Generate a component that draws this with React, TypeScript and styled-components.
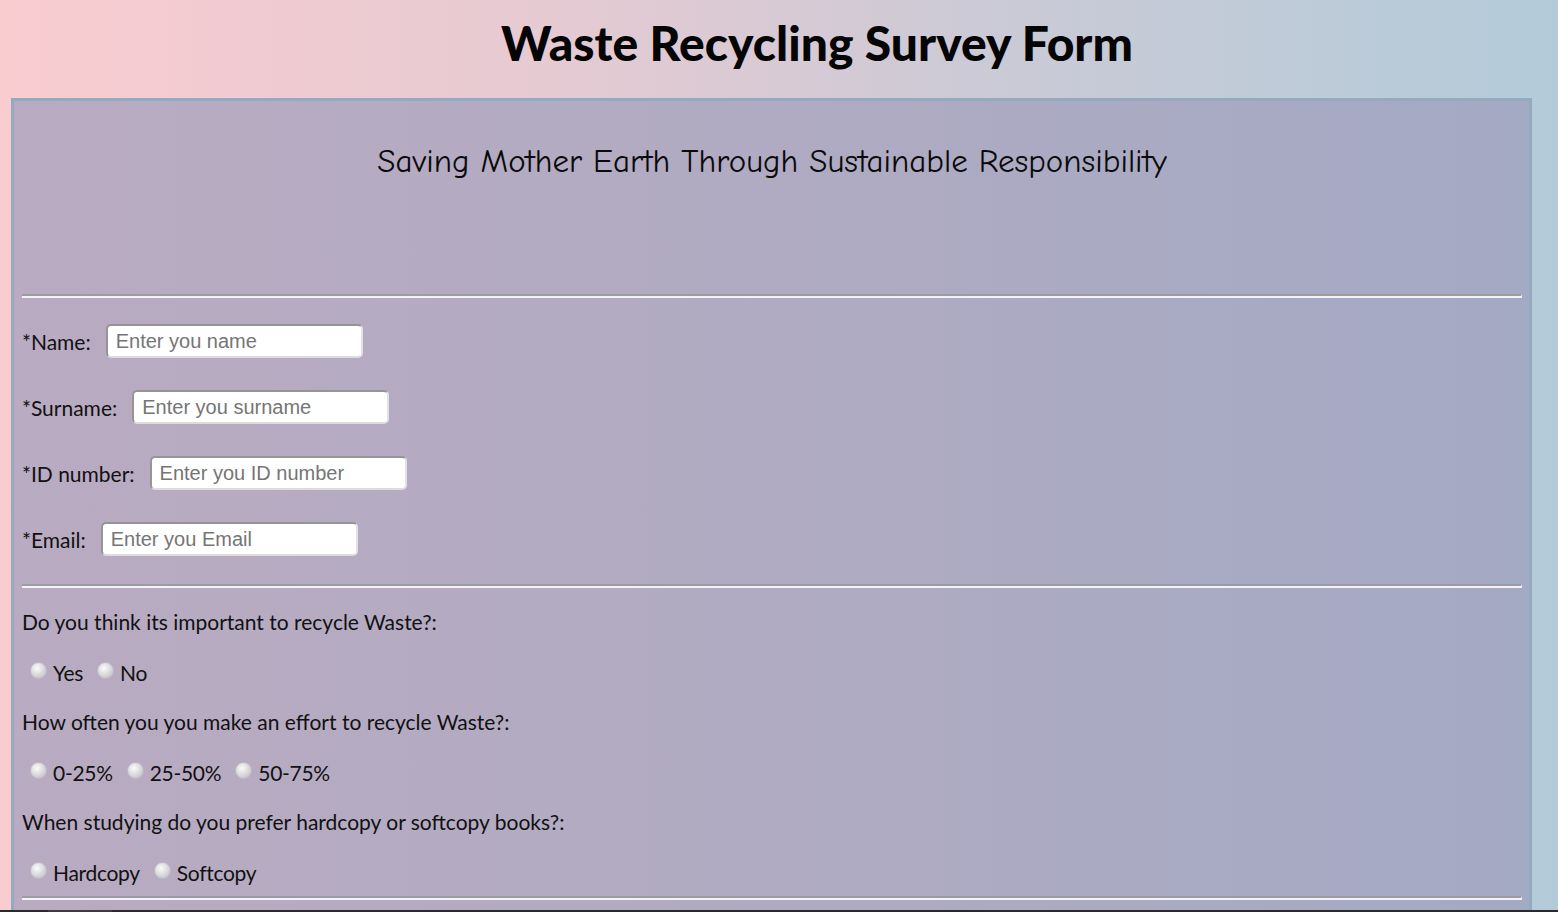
import * as React from "react";
import styled, { createGlobalStyle } from "styled-components";

const GlobalStyle = createGlobalStyle`
  html, body {
    margin: 0;
    padding: 0;
  }
  body {
    min-height: 912px;
    overflow: hidden;
    background: linear-gradient(90deg, #f9ccd0 0%, #e6cad2 35%, #cccad6 62%, #b3cbd9 100%);
    font-family: "Lato", "Open Sans", sans-serif;
    color: #111;
  }
`;

const Page = styled.div`
  width: 1558px;
  height: 912px;
  overflow: hidden;
`;

const Title = styled.h1`
  margin: 0;
  padding: 14px 0 0 76px;
  height: 98px;
  box-sizing: border-box;
  text-align: center;
  font-family: "Lato", sans-serif;
  font-weight: 900;
  font-size: 48px;
  line-height: 58px;
  color: #050505;
`;

const Panel = styled.form`
  margin: 0 0 0 11px;
  width: 1521px;
  box-sizing: border-box;
  min-height: 820px;
  border: 3px solid #93abbf;
  border-bottom: none;
  padding: 0 7px 0 8px;
  background: linear-gradient(90deg, #b9abc1 0%, #b1abc2 45%, #a4a9c4 100%);
`;

const Subtitle = styled.h2`
  margin: 40px 0 153px;
  height: 0;
  text-align: center;
  font-family: "Comic Neue", "DejaVu Sans", sans-serif;
  font-weight: normal;
  font-size: 33px;
  line-height: 40px;
  color: #0a0a0a;
`;

const Rule = styled.hr<{ $after?: number }>`
  margin: 0 0 ${(p) => p.$after ?? 0}px;
  height: 0;
  border: none;
  border-top: 2px solid #9b9ba3;
  border-bottom: 2px solid #f4f2f6;
  border-right: 1px solid #f4f2f6;
`;

const Fields = styled.div`
  display: flex;
  flex-direction: column;
  gap: 32px;
  margin-bottom: 28px;
`;

const FieldRow = styled.div`
  display: flex;
  align-items: center;
  gap: 15px;
  height: 34px;
`;

const FieldLabel = styled.label`
  font-size: 21px;
  color: #111;
`;

const TextInput = styled.input`
  width: 257px;
  height: 34px;
  box-sizing: border-box;
  border-radius: 5px;
  border: 2px solid;
  border-color: #959595 #e2e2e6 #dcdce0 #959595;
  background: #fff;
  padding: 0 8px;
  font-family: "Liberation Sans", Arial, sans-serif;
  font-size: 20px;
  color: #222;
  outline: none;
  &::placeholder {
    color: #757575;
  }
`;

const Questions = styled.div`
  display: flex;
  flex-direction: column;
  gap: 20px;
  padding-top: 19px;
  margin-bottom: 9px;
`;

const Question = styled.p`
  margin: 0;
  font-size: 21px;
  line-height: 30px;
`;

const Options = styled.div`
  display: flex;
  align-items: center;
  height: 30px;
  padding-left: 8px;
  gap: 14px;
`;

const Option = styled.label`
  display: flex;
  align-items: center;
  gap: 6px;
  font-size: 21px;
  letter-spacing: -0.3px;
`;

const Radio = styled.input.attrs({ type: "radio" })`
  appearance: none;
  margin: 0 0 3px;
  width: 17px;
  height: 17px;
  border-radius: 50%;
  border: 1px solid #bdbdc2;
  box-sizing: border-box;
  background: radial-gradient(circle at 40% 35%, #fbfbfb 0%, #e4e4e6 35%, #c9c9cd 75%, #b2b2b8 100%);
`;

const TaskbarEdge = styled.div`
  position: fixed;
  left: 0;
  right: 0;
  bottom: 0;
  height: 2px;
  background: linear-gradient(90deg, #2a2a2a 0 48px, #3c3c3c 48px 112px, #2a2a2a 112px);
`;

const fields = [
  { id: "name", label: "*Name:", placeholder: "Enter you name" },
  { id: "surname", label: "*Surname:", placeholder: "Enter you surname" },
  { id: "idnumber", label: "*ID number:", placeholder: "Enter you ID number" },
  { id: "email", label: "*Email:", placeholder: "Enter you Email" },
];

const questions = [
  {
    name: "important",
    text: "Do you think its important to recycle Waste?:",
    options: ["Yes", "No"],
  },
  {
    name: "often",
    text: "How often you you make an effort to recycle Waste?:",
    options: ["0-25%", "25-50%", "50-75%"],
  },
  {
    name: "books",
    text: "When studying do you prefer hardcopy or softcopy books?:",
    options: ["Hardcopy", "Softcopy"],
  },
];

export default function App() {
  return (
    <Page>
      <GlobalStyle />
      <Title>Waste Recycling Survey Form</Title>
      <Panel onSubmit={(e) => e.preventDefault()}>
        <Subtitle>Saving Mother Earth Through Sustainable Responsibility</Subtitle>
        <Rule $after={26} />
        <Fields>
          {fields.map((f) => (
            <FieldRow key={f.id}>
              <FieldLabel htmlFor={f.id}>{f.label}</FieldLabel>
              <TextInput id={f.id} type="text" placeholder={f.placeholder} />
            </FieldRow>
          ))}
        </Fields>
        <Rule />
        <Questions>
          {questions.map((q) => (
            <React.Fragment key={q.name}>
              <Question>{q.text}</Question>
              <Options>
                {q.options.map((o) => (
                  <Option key={o}>
                    <Radio name={q.name} value={o} />
                    {o}
                  </Option>
                ))}
              </Options>
            </React.Fragment>
          ))}
        </Questions>
        <Rule />
      </Panel>
      <TaskbarEdge />
    </Page>
  );
}
